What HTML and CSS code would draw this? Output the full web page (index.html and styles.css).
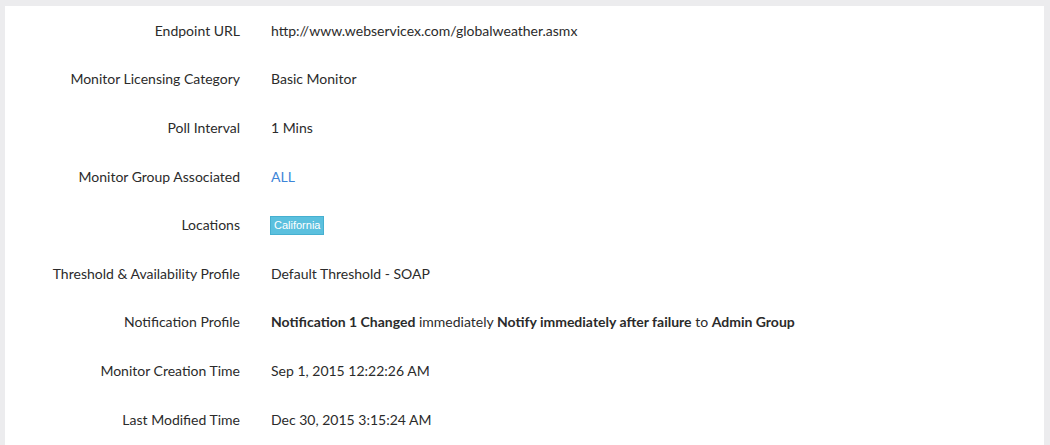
FILE: index.html
```html
<!DOCTYPE html>
<html lang="en">
<head>
<meta charset="UTF-8">
<title>Monitor Details</title>
<link rel="stylesheet" href="styles.css">
</head>
<body>
<div class="panel">
    <div class="detail-row">
        <div class="detail-label">Endpoint URL</div>
        <div class="detail-value">http://www.webservicex.com/globalweather.asmx</div>
    </div>
    <div class="detail-row">
        <div class="detail-label">Monitor Licensing Category</div>
        <div class="detail-value">Basic Monitor</div>
    </div>
    <div class="detail-row">
        <div class="detail-label">Poll Interval</div>
        <div class="detail-value">1 Mins</div>
    </div>
    <div class="detail-row">
        <div class="detail-label">Monitor Group Associated</div>
        <div class="detail-value"><a class="link" href="#">ALL</a></div>
    </div>
    <div class="detail-row">
        <div class="detail-label">Locations</div>
        <div class="detail-value"><span class="badge">California</span></div>
    </div>
    <div class="detail-row">
        <div class="detail-label">Threshold &amp; Availability Profile</div>
        <div class="detail-value">Default Threshold - SOAP</div>
    </div>
    <div class="detail-row">
        <div class="detail-label">Notification Profile</div>
        <div class="detail-value"><b>Notification 1 Changed</b> immediately <b>Notify immediately after failure</b> to <b>Admin Group</b></div>
    </div>
    <div class="detail-row">
        <div class="detail-label">Monitor Creation Time</div>
        <div class="detail-value">Sep 1, 2015 12:22:26 AM</div>
    </div>
    <div class="detail-row">
        <div class="detail-label">Last Modified Time</div>
        <div class="detail-value">Dec 30, 2015 3:15:24 AM</div>
    </div>
</div>
</body>
</html>
```

FILE: styles.css
```css
/* page */
body, html {
    margin: 0;
    padding: 0;
    background: #ececee;
    font-family: Lato, "Open Sans", sans-serif;
    font-size: 14px;
    color: #2b2b2b;
}

.panel {
    margin: 6px 6px 0 5px;
    background: #fff;
    min-height: 439px;
}

/* detail rows */
.detail-row {
    display: grid;
    grid-template-columns: 235px 1fr;
    column-gap: 31px;
    align-items: center;
    height: 48.6px;
}

.detail-label {
    text-align: right;
}

.detail-value b {
    font-weight: 700;
}

.link {
    color: #3d85d8;
    text-decoration: none;
}

.badge {
    display: inline-block;
    margin-left: -1px;
    background: #5bc0de;
    border: 1px solid #46b0d0;
    color: #fff;
    font-family: "Liberation Sans", Arial, sans-serif;
    font-size: 11px;
    line-height: 15px;
    padding: 1px 3px;
}
```
